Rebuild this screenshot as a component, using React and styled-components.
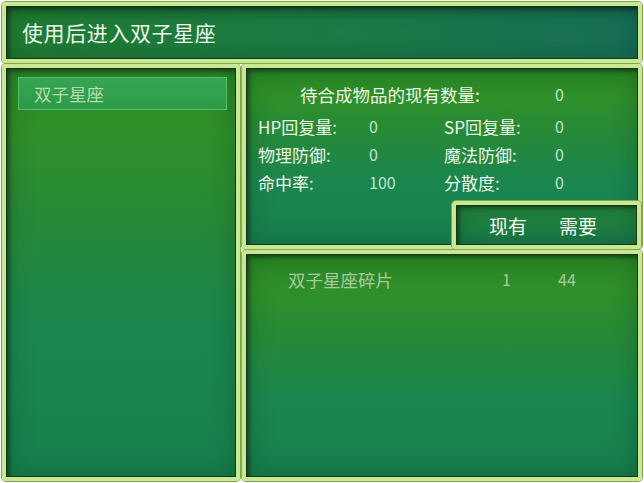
import React from 'react';
import styled, { createGlobalStyle } from 'styled-components';

const Global = createGlobalStyle`
  html, body { margin: 0; padding: 0; background: #ffffff; }
  body { font-family: "Noto Sans CJK SC", "Noto Sans", sans-serif; }
`;

const Screen = styled.div`
  width: 644px;
  height: 483px;
  box-sizing: border-box;
  padding: 2px;
  display: grid;
  grid-template-columns: 238px 1fr;
  grid-template-rows: 61px 1fr;
  column-gap: 2px;
  row-gap: 1px;
`;

const Frame = styled.div`
  position: relative;
  box-sizing: border-box;
  border: 4px solid #c8e894;
  border-radius: 4px;
  box-shadow:
    0 0 0 1px #7da84e,
    inset 0 0 0 1px #1a361a,
    inset 3px 3px 4px rgba(0, 0, 0, 0.45),
    inset 0 0 28px rgba(0, 30, 10, 0.28);
  background: ${p => p.$bg};
  overflow: hidden;
`;

const panelBg = `linear-gradient(180deg, #2a8826 0%, #2f9029 16%, #25893a 40%, #1a8650 66%, #17804e 100%)`;
const topBg = `linear-gradient(180deg, rgba(0,0,0,0.12) 0%, rgba(0,0,0,0) 30%), linear-gradient(90deg, #1f7e34 0%, #1b7b46 55%, #177058 100%)`;

const TopBar = styled(Frame)`
  grid-column: 1 / 3;
  display: flex;
  align-items: center;
  padding-left: 16px;
  padding-bottom: 2px;
`;

const Title = styled.div`
  color: #eef4e6;
  font-size: 21px;
  letter-spacing: 0.6px;
`;

const LeftPanel = styled(Frame)`
  padding: 9px 9px 0 12px;
`;

const ListItem = styled.div`
  height: 33px;
  box-sizing: border-box;
  display: flex;
  align-items: center;
  padding-left: 15px;
  font-size: 17.5px;
  color: ${p => (p.$active ? '#b6dcae' : '#a8c8a0')};
  background: ${p => (p.$active ? 'linear-gradient(180deg, #36a552 0%, #2d9a48 100%)' : 'transparent')};
  border: 1px solid ${p => (p.$active ? '#52c06c' : 'transparent')};
`;

const RightColumn = styled.div`
  position: relative;
  display: grid;
  grid-template-rows: 185px 1fr;
  row-gap: 1px;
`;

const StatsPanel = styled(Frame)`
  padding: 12px 0 0 12px;
`;

const StatsHead = styled.div`
  display: grid;
  grid-template-columns: 255px 1fr;
  height: 28px;
  align-items: center;
  padding-left: 42px;
  font-size: 17.5px;
  color: #eef4e6;
`;

const StatsGrid = styled.div`
  display: grid;
  grid-template-columns: 111px 75px 111px 1fr;
  grid-auto-rows: 28px;
  align-items: center;
  font-size: 17px;
  margin-top: 4px;
`;

const Label = styled.span`
  color: #eef4e6;
`;

const Value = styled.span`
  color: #bfe4d2;
  font-size: 16px;
`;

const ItemsPanel = styled(Frame)`
  padding: 12px 0 0 42px;
`;

const ItemRow = styled.div`
  display: grid;
  grid-template-columns: 214px 56px 1fr;
  height: 26px;
  align-items: center;
  font-size: 17.5px;
  color: #a9c9a2;
`;

const Num = styled.span`
  font-size: 16px;
`;

const ColumnHeader = styled(Frame)`
  position: absolute;
  left: 210px;
  top: 137px;
  width: 189px;
  height: 48px;
  display: flex;
  align-items: center;
  padding-left: 33px;
  gap: 32px;
  font-size: 19px;
  color: #f2f6ec;
`;

const stats = [
  ['HP回复量:', '0', 'SP回复量:', '0'],
  ['物理防御:', '0', '魔法防御:', '0'],
  ['命中率:', '100', '分散度:', '0'],
];

export default function App() {
  return (
    <>
      <Global />
      <Screen>
        <TopBar $bg={topBg}>
          <Title>使用后进入双子星座</Title>
        </TopBar>
        <LeftPanel $bg={panelBg}>
          <ListItem $active>双子星座</ListItem>
        </LeftPanel>
        <RightColumn>
          <StatsPanel $bg={panelBg}>
            <StatsHead>
              <span>待合成物品的现有数量:</span>
              <Value>0</Value>
            </StatsHead>
            <StatsGrid>
              {stats.map((row, i) => (
                <React.Fragment key={i}>
                  <Label>{row[0]}</Label>
                  <Value>{row[1]}</Value>
                  <Label>{row[2]}</Label>
                  <Value>{row[3]}</Value>
                </React.Fragment>
              ))}
            </StatsGrid>
          </StatsPanel>
          <ItemsPanel $bg={panelBg}>
            <ItemRow>
              <span>双子星座碎片</span>
              <Num>1</Num>
              <Num>44</Num>
            </ItemRow>
          </ItemsPanel>
          <ColumnHeader $bg="linear-gradient(180deg, #23883a 0%, #1a7a4c 100%)">
            <span>现有</span>
            <span>需要</span>
          </ColumnHeader>
        </RightColumn>
      </Screen>
    </>
  );
}
